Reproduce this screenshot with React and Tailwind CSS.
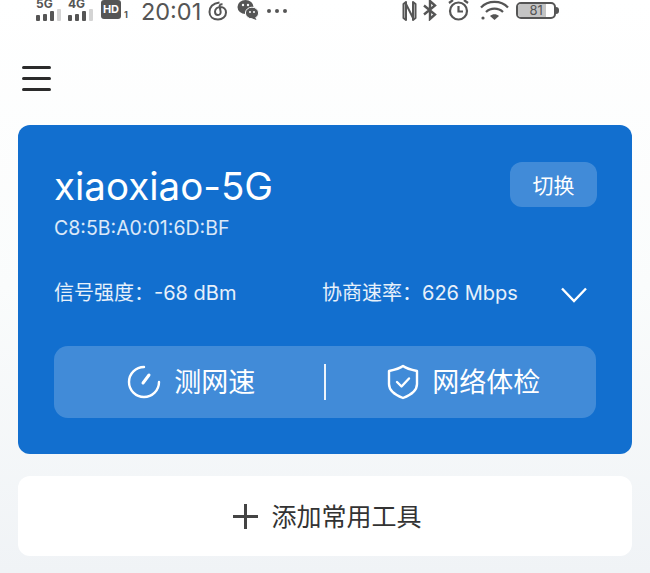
const font = { fontFamily: '"Inter", "Noto Sans CJK SC", sans-serif' };

// signal bars with small network label on top
const Signal = ({ label, className }) => (
  <div className={`flex flex-col items-start w-[26px] shrink-0 ${className}`}>
    <span className="text-[12px] leading-[9px] font-bold text-[#555] -mt-[1px]">{label}</span>
    <svg width="26" height="12" viewBox="0 0 26 12" className="mt-[1px]">
      <rect x="0" y="6" width="4" height="6" rx="1" fill="#555" />
      <rect x="7" y="5" width="4" height="7" rx="1" fill="#555" />
      <rect x="14" y="2" width="4" height="10" rx="1" fill="#555" />
      <rect x="21" y="0" width="4" height="12" rx="1" fill="#d4d4d4" />
    </svg>
  </div>
);

const NeteaseIcon = () => (
  <svg width="20" height="20" viewBox="0 0 20 20" fill="none" stroke="#555" strokeWidth="2">
    <path d="M11.5 1.5 C5 2.5 1.5 6 1.5 11 C1.5 15.5 5 18.5 10 18.5 C14.5 18.5 18 15.5 18 11.5 C18 8 15.5 6 12.5 6 C9.5 6 7 8 7 10.8 C7 13 8.5 14 10 14 C11.8 14 13 12.5 12.6 10.5 L11.6 5.5 C11.4 4 12.5 3 14.5 3.5" />
  </svg>
);

const WechatIcon = () => (
  <svg width="22" height="22" viewBox="0 0 22 22" fill="#555">
    <ellipse cx="8.5" cy="8" rx="8" ry="7" />
    <ellipse cx="15" cy="14" rx="6.6" ry="5.8" stroke="#fbfcfc" strokeWidth="1" />
    <path d="M18 18 L19.5 21 L15 19.5Z" />
    <circle cx="6" cy="6" r="1.2" fill="#fbfcfc" />
    <circle cx="11" cy="6" r="1.2" fill="#fbfcfc" />
    <circle cx="13" cy="13" r="1" fill="#fbfcfc" />
    <circle cx="17" cy="13" r="1" fill="#fbfcfc" />
  </svg>
);

const StatusBar = () => (
  <div className="h-[25px] flex items-start text-[#555]">
    <Signal label="5G" className="ml-[36px]" />
    <Signal label="4G" className="ml-[6px]" />
    <div className="ml-[7px] flex items-end">
      <div className="w-[20px] h-[19px] rounded-[3px] bg-[#555] text-white text-[11px] leading-[19px] font-bold text-center">HD</div>
      <span className="text-[9px] leading-[9px] ml-[3px] font-bold">1</span>
    </div>
    <span className="ml-[13px] text-[23.5px] leading-[23px]">20:01</span>
    <div className="ml-[7px] mt-[1px]"><NeteaseIcon /></div>
    <div className="ml-[9px] -mt-[1px]"><WechatIcon /></div>
    <div className="ml-[8px] mt-[9px] flex gap-[4px]">
      <span className="w-[4px] h-[4px] rounded-full bg-[#555]" />
      <span className="w-[4px] h-[4px] rounded-full bg-[#555]" />
      <span className="w-[4px] h-[4px] rounded-full bg-[#555]" />
    </div>
    <div className="ml-[115px] flex items-start gap-[6px]">
      <svg width="15" height="20" viewBox="0 0 15 20" fill="none" stroke="#555" strokeWidth="2" strokeLinejoin="round" className="mt-[1px]">
        <path d="M1.5 3 L4 1 V19 L1.5 17 Z" />
        <path d="M4 3 L11 17" />
        <path d="M13.5 17 L11 19 V1 L13.5 3 Z" />
      </svg>
      <svg width="14" height="21" viewBox="0 0 14 21" fill="none" stroke="#555" strokeWidth="2.4">
        <path d="M1 5.5 L12 14.5 L7 19 V1 L12 5.5 L1 14.5" />
      </svg>
      <svg width="23" height="22" viewBox="0 0 23 22" fill="none" stroke="#555" strokeWidth="2.2" className="ml-[4px] -mt-[1px]">
        <circle cx="11.5" cy="12" r="8.5" />
        <path d="M11.5 7 V12.5 H16" />
        <path d="M2 4 L6 1 M21 4 L17 1" />
      </svg>
      <svg width="29" height="21" viewBox="0 0 29 21" fill="none" stroke="#555" strokeWidth="2.2" className="ml-[4px]">
        <path d="M1 7.5 C8 0 21 0 28 7.5 M6 12 C10.5 7.5 18.5 7.5 23 12" />
        <path d="M10 16 C12.5 13.5 16.5 13.5 19 16 L14.5 20 Z" fill="#555" stroke="none" />
        <circle cx="3" cy="18" r="1.6" fill="#555" stroke="none" />
      </svg>
      <div className="ml-[1px] mt-[2px] flex items-center">
        <div className="relative w-[40px] h-[17px] rounded-[5px] border-2 border-[#555] overflow-hidden">
          <div className="h-full w-[28px] bg-[#c4c4c4]" />
          <span className="absolute inset-0 text-center text-[13px] leading-[13px] text-[#555]">81</span>
        </div>
        <div className="w-[3px] h-[7px] bg-[#555] rounded-r-sm" />
      </div>
    </div>
  </div>
);

export default function App() {
  return (
    <div
      style={font}
      className="w-[650px] h-[573px] overflow-hidden bg-gradient-to-b from-white via-[#fafcfc] to-[#f0f3f6]"
    >
      <StatusBar />

      {/* Menu */}
      <div className="mt-[41px] ml-[22px] w-[29px] flex flex-col gap-[8px]">
        <div className="h-[3px] rounded-full bg-[#2b2b2b]" />
        <div className="h-[3px] rounded-full bg-[#2b2b2b]" />
        <div className="h-[3px] rounded-full bg-[#2b2b2b]" />
      </div>

      {/* Wifi card */}
      <div className="mt-[34px] mx-[18px] h-[329px] rounded-[12px] bg-[#126fcf] px-[36px] pt-[36px] text-white">
        <div className="flex justify-between items-start">
          <div>
            <div className="text-[38.5px] leading-[50px]">xiaoxiao-5G</div>
            <div className="text-[19.5px] leading-[24px] mt-[5px] text-white/85">C8:5B:A0:01:6D:BF</div>
          </div>
          <button className="w-[87px] h-[45px] mt-[1px] -mr-[1px] rounded-[12px] bg-white/20 text-[21px] leading-[48px]">切换</button>
        </div>

        <div className="mt-[39px] flex items-center text-[20px] leading-[28px] text-white/90">
          <span className="w-[268px]">信号强度：-68 dBm</span>
          <span className="flex-1">协商速率：626 Mbps</span>
          <svg width="26" height="16" viewBox="0 0 26 16" fill="none" stroke="white" strokeWidth="2.4" className="mr-[9px] mt-[3px]">
            <path d="M1 1.5 L13 14 L25 1.5" />
          </svg>
        </div>

        <div className="mt-[39px] h-[72px] rounded-[14px] bg-white/20 flex items-center text-[27px]">
          <div className="flex-1 flex items-center justify-center gap-[13px] pl-[5px]">
            <svg width="34" height="34" viewBox="0 0 34 34" fill="none" stroke="white" strokeWidth="2.4" strokeLinecap="round">
              <path d="M17 2 A15 15 0 1 0 32 17" />
              <path d="M16 18 L22 10" strokeWidth="3" />
            </svg>
            <span className="mt-[3px]">测网速</span>
          </div>
          <div className="w-[2px] h-[36px] bg-white/90" />
          <div className="flex-1 flex items-center justify-center gap-[13px] pl-[6px]">
            <svg width="32" height="36" viewBox="0 0 32 36" fill="none" stroke="white" strokeWidth="2.4" strokeLinejoin="round" strokeLinecap="round">
              <path d="M16 2 C20 5 25 6 30 7 V20 C30 27 24 31 16 34 C8 31 2 27 2 20 V7 C7 6 12 5 16 2 Z" />
              <path d="M10 18 L14.5 22.5 L22 14.5" />
            </svg>
            <span className="mt-[3px]">网络体检</span>
          </div>
        </div>
      </div>

      {/* Add tool */}
      <div className="mt-[22px] mx-[18px] h-[80px] rounded-[12px] bg-white flex items-center justify-center gap-[13px] pl-[5px] text-[#333] text-[25px]">
        <svg width="25" height="25" viewBox="0 0 25 25" stroke="#444" strokeWidth="3">
          <path d="M0 12.5 H25 M12.5 0 V25" />
        </svg>
        <span className="mt-[3px]">添加常用工具</span>
      </div>
    </div>
  );
}
